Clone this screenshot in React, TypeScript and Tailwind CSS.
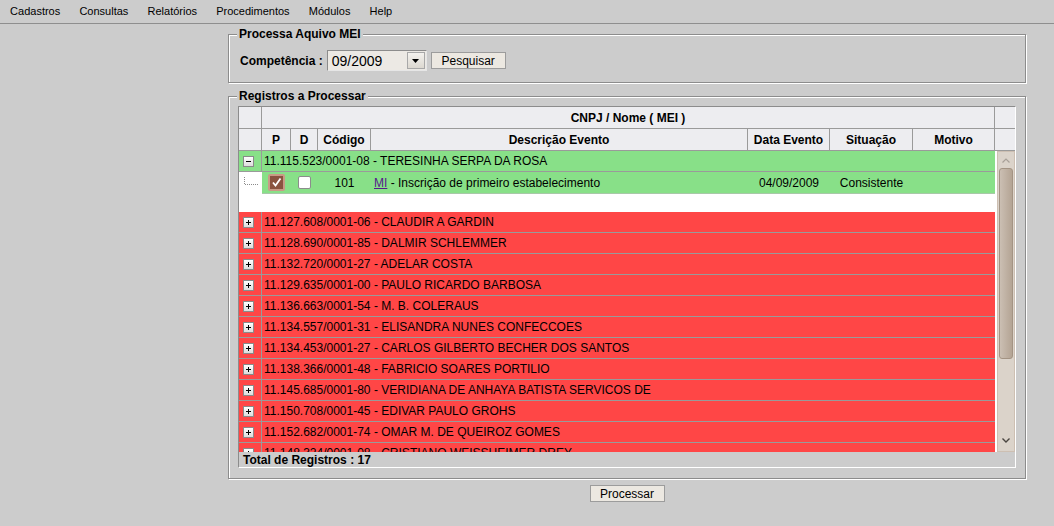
import React from 'react'

const menus = ['Cadastros', 'Consultas', 'Relatórios', 'Procedimentos', 'Módulos', 'Help']

const empresas = [
  '11.127.608/0001-06 - CLAUDIR A GARDIN',
  '11.128.690/0001-85 - DALMIR SCHLEMMER',
  '11.132.720/0001-27 - ADELAR COSTA',
  '11.129.635/0001-00 - PAULO RICARDO BARBOSA',
  '11.136.663/0001-54 - M. B. COLERAUS',
  '11.134.557/0001-31 - ELISANDRA NUNES CONFECCOES',
  '11.134.453/0001-27 - CARLOS GILBERTO BECHER DOS SANTOS',
  '11.138.366/0001-48 - FABRICIO SOARES PORTILIO',
  '11.145.685/0001-80 - VERIDIANA DE ANHAYA BATISTA SERVICOS DE',
  '11.150.708/0001-45 - EDIVAR PAULO GROHS',
  '11.152.682/0001-74 - OMAR M. DE QUEIROZ GOMES',
  '11.148.324/0001-08 - CRISTIANO WEISSHEIMER DREY',
  '11.151.203/0001-12 - JOAO CARLOS DA SILVA',
]

function Toggle({ open }: { open?: boolean }) {
  return (
    <span className="flex h-[11px] w-[11px] items-center justify-center border border-[#8a8a8a] bg-linear-to-b from-white to-[#dcdcdc]">
      <svg width="9" height="9" viewBox="0 0 9 9">
        <line x1="2" y1="4.5" x2="7" y2="4.5" stroke="#000" strokeWidth="1" />
        {!open && <line x1="4.5" y1="2" x2="4.5" y2="7" stroke="#000" strokeWidth="1" />}
      </svg>
    </span>
  )
}

function HeadCell({ children, className = '' }: { children?: React.ReactNode; className?: string }) {
  return (
    <div className={`flex items-center justify-center border-b border-r border-[#9a9a9a] bg-[#ededf0] font-bold ${className}`}>
      {children}
    </div>
  )
}

function Button({ label }: { label: string }) {
  return (
    <button className="h-[17px] w-[75px] border border-[#9c9c9c] bg-[#ece8e1] text-[12px] leading-none text-black">
      {label}
    </button>
  )
}

export default function App() {
  return (
    <div className="min-h-[526px] bg-[#cccccc] font-['Liberation_Sans',Arial,sans-serif] text-[12px] text-black">
      <div className="flex h-[24px] items-center border-b border-[#8e8e8e] pl-[0.5px] text-[11px]">
        {menus.map(m => (
          <span key={m} className="px-[9.6px]">{m}</span>
        ))}
      </div>

      <div className="ml-[228px] w-[798px]">
        <fieldset className="mt-[3px] border border-[#8c8c8c] pb-[11px] pl-[8px] shadow-[1px_1px_0_#fff,inset_1px_1px_0_#fff]">
          <legend className="bg-[#cccccc] px-[2px] font-bold leading-[14px]">Processa Aquivo MEI</legend>
          <div className="flex items-center pt-[9px]">
            <span className="ml-[3px] font-bold">Competência :</span>
            <div className="ml-[4px] flex h-[21px] w-[100px] items-center border border-[#8c8c8c] border-b-[#e6e6e6] border-r-[#e6e6e6] bg-[#ece9e4]">
              <span className="flex-1 pl-[4px] text-[14px] leading-none">09/2009</span>
              <span className="mr-[1px] flex h-[17px] w-[18px] items-center justify-center border border-[#a8a8a8] bg-linear-to-b from-[#f4f2ee] to-[#dcd8d0]">
                <svg width="7" height="4" viewBox="0 0 7 4">
                  <path d="M0 0h7L3.5 4z" fill="#000" />
                </svg>
              </span>
            </div>
            <span className="ml-[4px]">
              <Button label="Pesquisar" />
            </span>
          </div>
        </fieldset>

        <fieldset className="mt-[6px] border border-[#8c8c8c] pb-[10px] pl-[8px] shadow-[1px_1px_0_#fff,inset_1px_1px_0_#fff]">
          <legend className="bg-[#cccccc] px-[2px] font-bold leading-[14px]">Registros a Processar</legend>
          <div className="ml-[1px] mt-[3px] w-[778px] border border-b-white border-l-[#8c8c8c] border-r-white border-t-[#8c8c8c]">
            <div className="grid grid-cols-[23px_29px_27px_53px_377px_82px_83px_82px_20px] grid-rows-[22px_22px]">
              <HeadCell />
              <HeadCell className="col-span-7">CNPJ / Nome ( MEI )</HeadCell>
              <HeadCell className="border-r-0" />
              <HeadCell />
              <HeadCell>P</HeadCell>
              <HeadCell>D</HeadCell>
              <HeadCell>Código</HeadCell>
              <HeadCell>Descrição Evento</HeadCell>
              <HeadCell>Data Evento</HeadCell>
              <HeadCell>Situação</HeadCell>
              <HeadCell>Motivo</HeadCell>
              <HeadCell className="border-r-0" />
            </div>

            <div className="flex h-[301px] overflow-hidden bg-white">
              <div className="w-[756px]">
                <div className="flex h-[21px] border-b border-[#9a9a9a] bg-[#88e088]">
                  <div className="flex w-[23px] items-center border-r border-[#9a9a9a] pl-[4px]">
                    <Toggle open />
                  </div>
                  <div className="flex items-center pl-[2px]">11.115.523/0001-08 - TERESINHA SERPA DA ROSA</div>
                </div>
                <div className="flex h-[22px]">
                  <div className="w-[23px]">
                    <svg width="23" height="22" viewBox="0 0 23 22">
                      <line x1="5.5" y1="5" x2="5.5" y2="12" stroke="#8a8a8a" strokeDasharray="1 1" />
                      <line x1="6" y1="12.5" x2="20" y2="12.5" stroke="#8a8a8a" strokeDasharray="1 1" />
                    </svg>
                  </div>
                  <div className="grid flex-1 grid-cols-[29px_27px_53px_377px_82px_83px_82px] items-center border-b border-[#a8c8a8] bg-[#88e088]">
                    <div className="flex justify-center">
                      <span className="flex h-[17px] w-[17px] items-center justify-center rounded-[2px] border-[2px] border-[#c99a86] bg-[#8a5440]">
                        <svg width="11" height="11" viewBox="0 0 11 11">
                          <path d="M2 5.5l2.5 3L9.5 1.5" fill="none" stroke="#fff" strokeWidth="1.8" />
                        </svg>
                      </span>
                    </div>
                    <div className="flex justify-center">
                      <span className="h-[13px] w-[13px] rounded-[2px] border border-[#8c8c8c] bg-white" />
                    </div>
                    <div className="text-center">101</div>
                    <div className="pl-[3px]">
                      <span className="text-[#551a8b] underline">MI</span> - Inscrição de primeiro estabelecimento
                    </div>
                    <div className="text-center">04/09/2009</div>
                    <div className="text-center">Consistente</div>
                    <div />
                  </div>
                </div>
                <div className="h-[18px]" />
                {empresas.map(e => (
                  <div key={e} className="flex h-[21px] border-b border-[#9a9a9a] bg-[#ff4646]">
                    <div className="flex w-[23px] items-center border-r border-[#9a9a9a] pl-[4px]">
                      <Toggle />
                    </div>
                    <div className="flex items-center whitespace-nowrap pl-[2px]">{e}</div>
                  </div>
                ))}
              </div>
              <div className="ml-[2px] flex w-[18px] flex-col items-center border border-[#cdbfb2] bg-[#dbd3ca]">
                <svg className="mt-[6px]" width="8" height="5" viewBox="0 0 8 5">
                  <path d="M0.5 4.5L4 1l3.5 3.5" fill="none" stroke="#a8a098" strokeWidth="1.2" />
                </svg>
                <div className="mt-[5px] h-[191px] w-[14px] rounded-[3px] border border-[#a39383] bg-linear-to-r from-[#cbbfb3] to-[#b4a494]" />
                <div className="flex-1" />
                <svg className="mb-[8px]" width="8" height="5" viewBox="0 0 8 5">
                  <path d="M0.5 0.5L4 4l3.5-3.5" fill="none" stroke="#4a4540" strokeWidth="1.4" />
                </svg>
              </div>
            </div>

            <div className="flex h-[15px] items-center pl-[4px] font-bold">Total de Registros : 17</div>
          </div>
        </fieldset>

        <div className="mt-[6px] flex justify-center">
          <Button label="Processar" />
        </div>
      </div>
    </div>
  )
}
